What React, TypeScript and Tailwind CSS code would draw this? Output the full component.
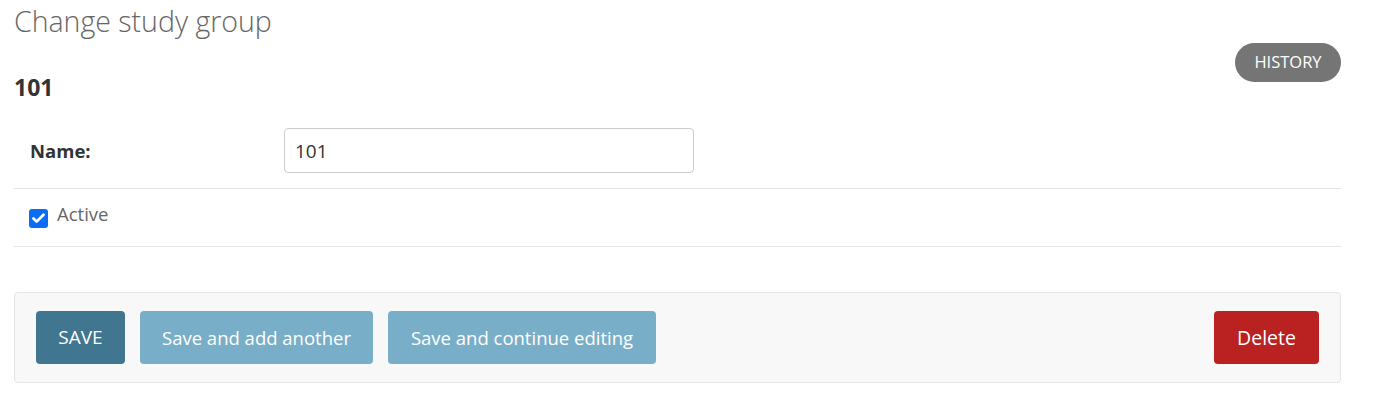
import { Check } from 'lucide-react'

const font = { fontFamily: '"Open Sans", "Noto Sans", sans-serif' }

export default function App() {
  return (
    <div className="w-[1395px] h-[415px] bg-white text-[#333]" style={font}>
      <div className="pl-[14px] w-[1341px]">
        <h1 className="h-[40px] pt-[2px] text-[28.5px] font-light leading-[38px] text-[#666]">
          Change study group
        </h1>

        <div className="flex items-start justify-between">
          <h2 className="mt-[32px] text-[23px] font-bold leading-[30px] text-[#333]">101</h2>
          <a className="mt-[3px] flex h-[39px] w-[106px] items-center justify-center rounded-full bg-[#757575] text-[16.5px] uppercase text-white">
            History
          </a>
        </div>

        {/* Fields */}
        <div className="mt-[24px]">
          <div className="flex items-center border-b border-[#e5e5e5] pb-[15px] pt-[2px]">
            <label className="w-[270px] pl-[16px] text-[18.5px] font-bold text-[#333]">Name:</label>
            <input
              type="text"
              defaultValue="101"
              className="h-[45px] w-[410px] rounded-[4px] border border-[#ccc] px-[10px] text-[19px] text-[#333] focus:outline-none"
            />
          </div>
          <div className="flex h-[58px] items-start gap-[9px] border-b border-[#e5e5e5] pl-[15px] pt-[12px]">
            <span className="mt-[8px] flex h-[19px] w-[19px] items-center justify-center rounded-[3px] bg-[#0b6cf5]">
              <Check className="h-[15px] w-[15px] text-white" strokeWidth={4.5} />
            </span>
            <span className="text-[18.5px] leading-[26px] text-[#666]">Active</span>
          </div>
        </div>

        {/* Submit row */}
        <div className="mt-[45px] flex h-[91px] items-center justify-between rounded-[4px] border border-[#e5e5e5] bg-[#f8f8f8] px-[21px]">
          <div className="flex gap-[15px]">
            <button className="h-[53px] w-[89px] rounded-[4px] bg-[#417690] text-[19px] text-white">
              SAVE
            </button>
            <button className="h-[53px] w-[233px] rounded-[4px] bg-[#79aec8] text-[18.5px] text-white">
              Save and add another
            </button>
            <button className="h-[53px] w-[268px] rounded-[4px] bg-[#79aec8] text-[18.5px] text-white">
              Save and continue editing
            </button>
          </div>
          <button className="h-[53px] w-[105px] rounded-[4px] bg-[#ba2121] text-[19.5px] text-white">
            Delete
          </button>
        </div>
      </div>
    </div>
  )
}
